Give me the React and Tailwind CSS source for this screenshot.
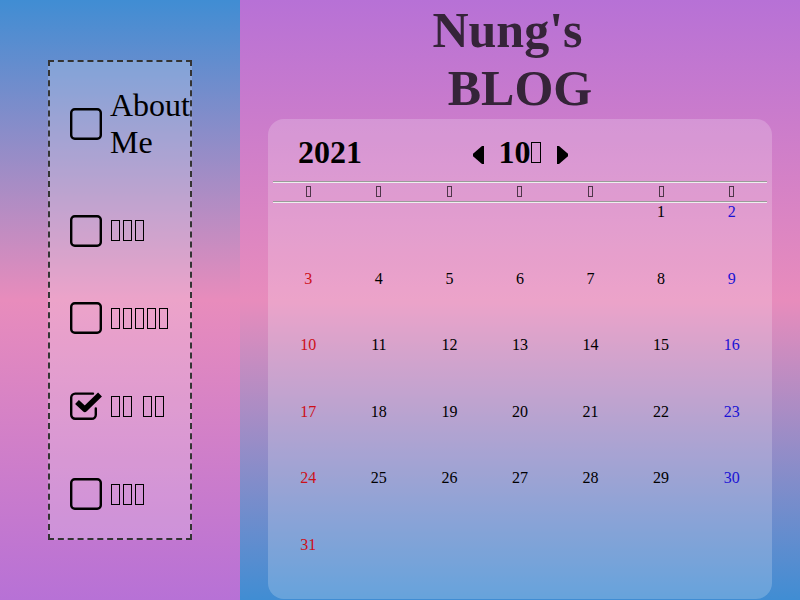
import React from 'react';

const MENU = [
  { id: 'about', label: 'About Me', checked: false },
  { id: 'menu-2', words: [3], checked: false },
  { id: 'menu-3', words: [5], checked: false },
  { id: 'menu-4', words: [2, 2], checked: true },
  { id: 'menu-5', words: [3], checked: false },
];

const FIRST_DAY = 5;
const DAYS = 31;
const WEEKS = Array.from({ length: 6 }, (_, week) =>
  Array.from({ length: 7 }, (_, day) => {
    const date = week * 7 + day - FIRST_DAY + 1;
    return date >= 1 && date <= DAYS ? date : null;
  })
);

function dayColor(day) {
  if (day === 0) return 'text-[#cd1018]';
  if (day === 6) return 'text-[#1a12d4]';
  return 'text-black';
}

/* The outlined box of a character without a glyph, standing on the baseline. */
function GlyphBox({ className }) {
  return <span className={`inline-block border ${className}`} />;
}

function BoxWord({ count }) {
  return (
    <span>
      {Array.from({ length: count }, (_, index) => (
        <GlyphBox key={index} className="mr-[2px] ml-px h-[21px] w-[9px] border-black" />
      ))}
    </span>
  );
}

function CheckIcon({ checked }) {
  return (
    <svg viewBox="0 0 32 32" className="col-start-1 row-start-1 size-8" fill="none" stroke="black" aria-hidden="true">
      {checked ? (
        <>
          <path
            d="M23 3.6H5.2A4 4 0 0 0 1.2 7.6V24.8A4 4 0 0 0 5.2 28.8H21.8A4 4 0 0 0 25.8 24.8V18.5"
            strokeWidth="2.4"
            strokeLinecap="round"
          />
          <path d="M7 12L14.8 19.2L30 4.5" strokeWidth="5.6" strokeLinejoin="round" />
        </>
      ) : (
        <rect x="1.2" y="1.2" width="29.6" height="29.6" rx="3.6" strokeWidth="2.4" />
      )}
    </svg>
  );
}

function MenuItem({ id, label, words, checked }) {
  return (
    <li>
      <label htmlFor={id} className="flex items-center gap-2">
        <span className="grid shrink-0">
          <input
            id={id}
            type="checkbox"
            defaultChecked={checked}
            className="col-start-1 row-start-1 size-8 appearance-none opacity-0"
          />
          <CheckIcon checked={checked} />
        </span>
        {label ? (
          <span>{label}</span>
        ) : (
          <span className="whitespace-nowrap">
            {words.map((count, index) => (
              <React.Fragment key={index}>
                {index > 0 && ' '}
                <BoxWord count={count} />
              </React.Fragment>
            ))}
          </span>
        )}
      </label>
    </li>
  );
}

export default function App() {
  return (
    <div className="flex h-screen overflow-hidden font-['Liberation_Serif',serif] text-black">
      <nav className="flex w-[30%] items-center justify-center bg-[linear-gradient(#408dd3,#e88cbc,#b771d6)]">
        <ul className="flex h-4/5 w-3/5 flex-col justify-around border-2 border-dashed border-[#333] bg-white/20 pl-5 text-[32px] leading-[37px]">
          {MENU.map((item) => (
            <MenuItem key={item.id} {...item} />
          ))}
        </ul>
      </nav>

      <main className="flex flex-1 flex-col items-center bg-[linear-gradient(#b771d6,#e88cbc,#408dd3)]">
        <h1 className="pt-px pb-[2px] text-center text-[50px] leading-[58px] font-bold text-[#352439]">
          Nung's&nbsp;&nbsp;
          <br />
          BLOG
        </h1>

        <section className="h-4/5 w-[90%] shrink-0 rounded-2xl bg-white/20 px-[5px]">
          <header className="grid grid-cols-[1fr_auto_1fr] items-center px-[25px] pt-[15px] pb-[10px] text-[32px] leading-[37px] font-bold">
            <h2>2021</h2>
            <div className="flex items-center gap-[15px]">
              <button type="button" aria-label="Previous month" className="pt-1">
                <svg viewBox="0 0 12 18" className="h-[18px] w-3">
                  <path d="M12 0V18H10L1 10.2V7.8L10 0Z" />
                </svg>
              </button>
              <h2>
                10
                <GlyphBox className="mr-px h-[21px] w-[10px] border-black" />
              </h2>
              <button type="button" aria-label="Next month" className="pt-1">
                <svg viewBox="0 0 12 18" className="h-[18px] w-3">
                  <path d="M0 0V18H2L11 10.2V7.8L2 0Z" />
                </svg>
              </button>
            </div>
          </header>

          <table className="h-[421px] w-full table-fixed text-center text-base leading-[18px]">
            <thead>
              <tr>
                {WEEKS[0].map((_, day) => (
                  <th
                    key={day}
                    scope="col"
                    className="h-[22px] p-0 font-normal shadow-[inset_0_1px_#9a9a9a,inset_0_2px_#eee,inset_0_-1px_#eee,inset_0_-2px_#9a9a9a]"
                  >
                    <GlyphBox className="h-[11px] w-[5px] border-black/65" />
                  </th>
                ))}
              </tr>
            </thead>
            <tbody>
              {WEEKS.map((week, index) => (
                <tr key={index} className="h-[66px]">
                  {week.map((date, day) => (
                    <td key={day} className={`p-0 align-top ${dayColor(day)}`}>
                      {date}
                    </td>
                  ))}
                </tr>
              ))}
            </tbody>
          </table>
        </section>
      </main>
    </div>
  );
}
